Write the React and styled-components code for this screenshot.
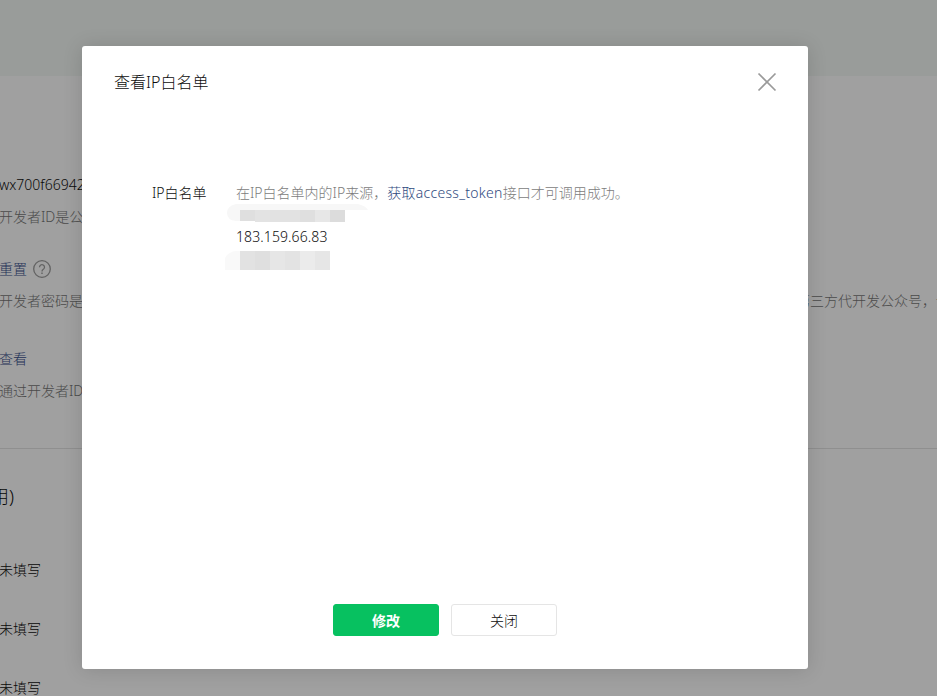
import styled, { createGlobalStyle, css } from "styled-components";

const GlobalStyle = createGlobalStyle`
  * {
    box-sizing: border-box;
  }
  body {
    margin: 0;
    overflow: hidden;
    background-color: #a0a0a0;
    font-family: "Noto Sans", "Noto Sans CJK SC", sans-serif;
    font-size: 14px;
    font-weight: 300;
    line-height: 22px;
    color: #353535;
  }
`;

const urls = [
  { key: "url", text: "未填写" },
  { key: "token", text: "未填写" },
  { key: "aesKey", text: "未填写" },
];

const Screen = styled.div`
  position: relative;
  width: 937px;
  height: 696px;
  overflow: hidden;
`;

const Page = styled.div`
  display: flex;
  flex-direction: column;
  height: 100%;
  white-space: nowrap;
`;

const Header = styled.div`
  flex: none;
  height: 76px;
  background-color: #999c9a;
`;

const DevInfo = styled.div`
  flex: none;
  display: flex;
  flex-direction: column;
  height: 373px;
  padding-top: 98px;
  border-bottom: 1px solid #8f8f8f;
`;

const Field = styled.div`
  display: flex;
  flex-direction: column;
  gap: 10px;
  margin: 0 -13px ${({ $gap }) => $gap || "36px"} -1px;
`;

const Value = styled.div`
  display: flex;
  align-items: center;
  gap: 6px;
  height: 22px;
  color: ${({ $link }) => ($link ? "#1f3157" : "#080808")};
`;

const Tips = styled.div`
  display: flex;
  justify-content: space-between;
  height: 22px;
  color: #4a4a4a;
`;

const ServerInfo = styled.div`
  display: flex;
  flex-direction: column;
`;

const SectionTitle = styled.div`
  margin: 35px 0 0 -9px;
  height: 24px;
  line-height: 24px;
  font-size: 18px;
  color: #080808;
`;

const ServerRow = styled.div`
  margin: 0 0 37px -1px;
  height: 22px;
  color: #080808;

  &:nth-child(2) {
    margin-top: 51px;
  }
`;

const Dialog = styled.div`
  position: absolute;
  top: 46px;
  left: 82px;
  display: flex;
  flex-direction: column;
  width: 726px;
  height: 623px;
  border-radius: 3px;
  background-color: #ffffff;
  box-shadow: 0 1px 20px 0 rgba(0, 0, 0, 0.14);
`;

const DialogHead = styled.div`
  display: flex;
  align-items: center;
  justify-content: space-between;
  height: 72px;
  padding: 0 31px 0 32px;
`;

const DialogTitle = styled.h3`
  margin: 0;
  font-size: 16px;
  font-weight: 300;
  color: #0c0c0c;
`;

const DialogBody = styled.div`
  flex: 1;
  display: flex;
  gap: 28px;
  padding: 64px 0 0 70px;
`;

const Label = styled.div`
  width: 56px;
  height: 22px;
  white-space: nowrap;
  color: #0c0c0c;
`;

const Content = styled.div`
  display: flex;
  flex-direction: column;
`;

const Hint = styled.p`
  margin: 0;
  height: 22px;
  white-space: nowrap;
  color: #7c7c7c;
`;

const Link = styled.a`
  letter-spacing: 0.28px;
  color: #2f4a80;
`;

const IpLine = styled.div`
  height: 22px;
  letter-spacing: 0.1px;
  color: #0c0c0c;
`;

const Mosaic = styled.svg`
  display: block;
  margin-left: -12px;
`;

const DialogFoot = styled.div`
  display: flex;
  gap: 12px;
  padding: 0 0 33px 251px;
`;

const Button = styled.button`
  width: 106px;
  height: 32px;
  padding: 1px 0 0;
  border: 1px solid #e5e5e5;
  border-radius: 3px;
  background-color: #ffffff;
  font: inherit;
  line-height: 30px;
  color: #0c0c0c;

  ${({ $primary }) =>
    $primary &&
    css`
      border-color: #07c160;
      background-color: #07c160;
      font-weight: 700;
      color: #ffffff;
    `}
`;

const HelpIcon = () => (
  <svg width="18" height="18" viewBox="0 0 18 18" fill="none" stroke="#626262">
    <circle cx="9" cy="9" r="8.3" strokeWidth="1.3" />
    <path d="M6.5 7.2a2.5 2.5 0 1 1 3.8 2.1c-.9.6-1.3 1-1.3 2.1" strokeWidth="1.3" />
    <path d="M9 12.6v1.4" strokeWidth="1.4" />
  </svg>
);

const CloseIcon = () => (
  <svg width="20" height="20" viewBox="0 0 20 20" stroke="#9a9a9a" strokeWidth="1.7">
    <path d="M1.5 1.5l17 17M18.5 1.5l-17 17" />
  </svg>
);

const topCells = ["#dfdfdf", "#e3e3e3", "#e2e2e2", "#e2e2e2", "#dfdfdf", "#e7e7e7", "#dcdcdc"];
const bottomCells = ["#e2e2e2", "#dfdfdf", "#e6e6e6", "#e3e3e3", "#ebebeb", "#e6e6e6"];

const App = () => {
  return (
    <>
      <GlobalStyle />
      <Screen>
        <Page>
          <Header />
          <DevInfo>
            <Field $gap="30px">
              <Value>wx700f66942</Value>
              <Tips>开发者ID是公</Tips>
            </Field>
            <Field>
              <Value $link>
                重置
                <HelpIcon />
              </Value>
              <Tips>
                <span>开发者密码是</span>
                <span>第三方代开发公众号，请</span>
              </Tips>
            </Field>
            <Field>
              <Value $link>查看</Value>
              <Tips>通过开发者ID</Tips>
            </Field>
          </DevInfo>
          <ServerInfo>
            <SectionTitle>用)</SectionTitle>
            {urls.map((url) => (
              <ServerRow key={url.key}>{url.text}</ServerRow>
            ))}
          </ServerInfo>
        </Page>

        <Dialog>
          <DialogHead>
            <DialogTitle>查看IP白名单</DialogTitle>
            <CloseIcon />
          </DialogHead>
          <DialogBody>
            <Label>IP白名单</Label>
            <Content>
              <Hint>
                在IP白名单内的IP来源，<Link>获取access_token</Link>接口才可调用成功。
              </Hint>
              <Mosaic width="144" height="22" viewBox="0 0 144 22">
                <path d="M3 9Q3 2 12 0H134Q142 2 144 6H16V17H12Q3 16 3 9z" fill="#f7f7f7" />
                {topCells.map((fill, i) => (
                  <rect key={i} x={16 + i * 15} y="6" width="15" height={i === 0 ? 11 : 12} fill={fill} />
                ))}
              </Mosaic>
              <IpLine>183.159.66.83</IpLine>
              <Mosaic width="144" height="22" viewBox="0 0 144 22">
                <path d="M1 22V10Q4 4 12 3H16V22z" fill="#f9f9f9" />
                {bottomCells.map((fill, i) => (
                  <rect key={i} x={16 + i * 15} y="3" width="15" height="19" fill={fill} />
                ))}
              </Mosaic>
            </Content>
          </DialogBody>
          <DialogFoot>
            <Button $primary>修改</Button>
            <Button>关闭</Button>
          </DialogFoot>
        </Dialog>
      </Screen>
    </>
  );
};

export default App;
